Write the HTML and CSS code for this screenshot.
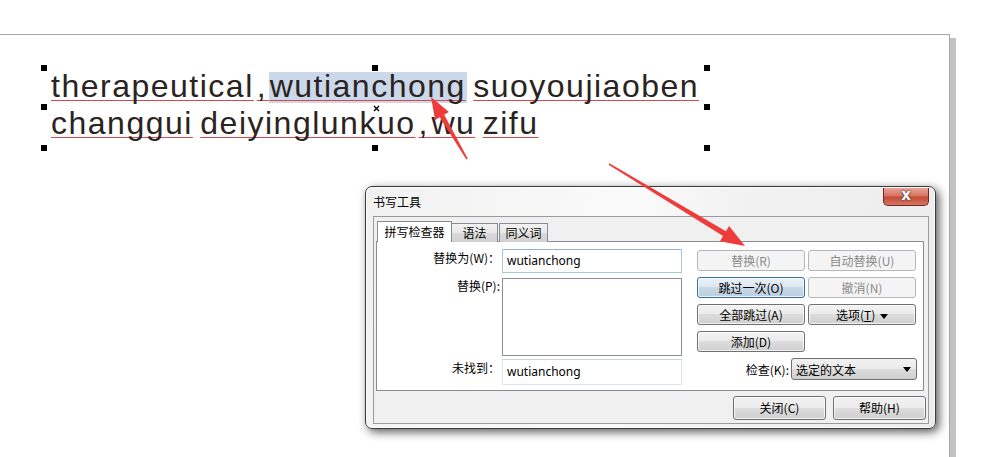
FILE: index.html
```html
<!DOCTYPE html>
<html lang="zh-CN">
<head>
    <meta charset="UTF-8">
    <meta name="viewport" content="width=device-width, initial-scale=1.0">
    <title>书写工具</title>
    <link rel="stylesheet" href="styles.css">
</head>
<body>
    <div class="page">
        <div class="frame">
            <p class="words"><span class="wd">therapeutical<span class="cm">,</span><span class="hl">wutianchong</span></span> <span class="wd">suoyoujiaoben</span><br><span class="wd">changgui</span> <span class="wd">deiyinglunkuo<span class="cm">,</span>wu</span> <span class="wd">zifu</span></p>

            <!-- selection handles -->
            <span class="handle h-tl"></span>
            <span class="handle h-tc"></span>
            <span class="handle h-tr"></span>
            <span class="handle h-ml"></span>
            <span class="handle h-mr"></span>
            <span class="handle h-bl"></span>
            <span class="handle h-bc"></span>
            <span class="handle h-br"></span>
            <svg class="center-mark" width="7" height="7" viewBox="0 0 7 7">
                <path d="M1 1 L6 6 M6 1 L1 6" stroke="#000" stroke-width="1.4"/>
            </svg>
        </div>
    </div>

    <div class="dialog">
        <div class="titlebar">
            <span class="title">书写工具</span>
            <span class="close">x</span>
        </div>
        <div class="client">
            <div class="tabs">
                <span class="tab active">拼写检查器</span>
                <span class="tab t2">语法</span>
                <span class="tab t3">同义词</span>
            </div>
            <div class="panel">
                <div class="fields">
                    <div class="row r1">
                        <label>替换为(W)：</label>
                        <div class="input focus">wutianchong</div>
                    </div>
                    <div class="row r2">
                        <label>替换(P):</label>
                        <div class="input area"></div>
                    </div>
                    <div class="row r3">
                        <label>未找到：</label>
                        <div class="input soft">wutianchong</div>
                    </div>
                </div>
                <div class="actions">
                    <div class="btn-grid">
                        <button class="btn" disabled>替换(R)</button>
                        <button class="btn" disabled>自动替换(U)</button>
                        <button class="btn default">跳过一次(O)</button>
                        <button class="btn" disabled>撤消(N)</button>
                        <button class="btn">全部跳过(A)</button>
                        <button class="btn">选项(<u>T</u>) <span class="caret"></span></button>
                        <button class="btn">添加(D)</button>
                    </div>
                    <div class="check">
                        <span class="check-label">检查(K):</span>
                        <div class="select">选定的文本<span class="caret"></span></div>
                    </div>
                </div>
            </div>
            <div class="footer">
                <button class="btn big">关闭(C)</button>
                <button class="btn big">帮助(H)</button>
            </div>
        </div>
    </div>

    <!-- red annotation arrows -->
    <svg class="arrows" width="998" height="457" viewBox="0 0 998 457">
        <polygon points="467.7,158.6 444.2,114.7 448.9,112 431,97 435.1,120 439.8,117.3 466.3,159.4" fill="#f03b3b"/>
        <polygon points="609.4,163.3 725.9,231.2 729.1,225.9 745,246 719.9,241.3 723.1,236 608.6,164.7" fill="#f03b3b"/>
    </svg>
</body>
</html>
```

FILE: styles.css
```css
body {
    margin: 0;
    background: #fff;
    font-family: "Liberation Sans", Arial, sans-serif;
    overflow: hidden;
}

.page {
    margin-top: 34px;
    width: 949px;
    height: 440px;
    border-top: 1px solid #a6a6a6;
    border-right: 1px solid #a6a6a6;
    box-shadow: 6px 4px 0 #c2c2c2;
}

.frame {
    position: relative;
    margin-left: 44px;
    margin-top: 33px;
    width: 663px;
    height: 80px;
}

.words {
    margin: 0;
    padding-left: 7px;
    font-size: 32px;
    line-height: 37px;
    letter-spacing: 1.5px;
    word-spacing: -3px;
    color: #2a231f;
    white-space: nowrap;
}

.wd {
    text-decoration: underline #d9474a 1px;
    text-underline-offset: 3px;
    text-decoration-skip-ink: none;
}

.cm {
    margin-left: 3px;
    letter-spacing: 4px;
}

.hl {
    background: linear-gradient(#cbd8e9, #cbd8e9) 0 4px / 100% 31px no-repeat;
    padding: 0 1px;
    margin: 0 -1px;
}

.handle {
    position: absolute;
    width: 6px;
    height: 6px;
    margin: -3px 0 0 -3px;
    background: #000;
}

.h-tl { left: 0; top: 0; }
.h-tc { left: 331px; top: 0; }
.h-tr { left: 663px; top: 0; }
.h-ml { left: 0; top: 39px; }
.h-mr { left: 663px; top: 39px; }
.h-bl { left: 0; top: 80px; }
.h-bc { left: 331px; top: 80px; }
.h-br { left: 663px; top: 80px; }

.center-mark {
    position: absolute;
    left: 329px;
    top: 37px;
}

.arrows {
    position: absolute;
    left: 0;
    top: 0;
    z-index: 10;
    pointer-events: none;
}

/* dialog window */
.dialog {
    position: absolute;
    left: 365px;
    top: 186px;
    width: 571px;
    height: 243px;
    box-sizing: border-box;
    border: 1px solid #3b3b3b;
    border-radius: 7px;
    background: linear-gradient(100deg, #f1f1f1 0%, #fafafa 45%, #f2f2f2 60%, #ececec 100%);
    box-shadow: 3px 3px 10px rgba(0, 0, 0, 0.65), inset 0 0 0 1px rgba(255, 255, 255, 0.8);
    font-family: "Noto Sans CJK SC", sans-serif;
    font-size: 12px;
    color: #000;
    z-index: 5;
}

.titlebar {
    height: 29px;
    display: flex;
    justify-content: space-between;
    align-items: flex-start;
    padding: 0 6px 0 7px;
}

.title {
    margin-top: 7px;
    line-height: 16px;
}

.close {
    width: 46px;
    height: 18px;
    box-sizing: border-box;
    margin-top: 1px;
    border: 1px solid #6d2a22;
    border-top: none;
    border-radius: 0 0 5px 5px;
    background: linear-gradient(#eaa497, #d77362 45%, #c64a37 55%, #d47865);
    color: #fff;
    font: bold 15px/15px "DejaVu Sans", sans-serif;
    text-align: center;
    text-shadow: 0 0 2px #333, 0 0 1px #333;
}

.client {
    margin: 0 6px 0 7px;
    height: 208px;
    box-sizing: border-box;
    border: 1px solid #9a9a9a;
    background: #f0f0f0;
    padding: 4px 4px 0 2px;
}

.tabs {
    display: flex;
    align-items: flex-end;
    height: 21px;
    padding-left: 1px;
    position: relative;
    z-index: 1;
    margin-bottom: -1px;
}

.tab {
    box-sizing: border-box;
    height: 19px;
    border: 1px solid #898c95;
    border-bottom: none;
    background: linear-gradient(#f3f3f3, #e8e8e8 50%, #dadada 51%, #d0d0d0);
    text-align: center;
    line-height: 18px;
}

.tab.active {
    width: 75px;
    height: 21px;
    line-height: 20px;
    background: #fff;
}

.tab.t2 {
    width: 46px;
    border-left: none;
}

.tab.t3 {
    width: 49px;
    margin-left: 1px;
}

.panel {
    box-sizing: border-box;
    width: 548px;
    height: 150px;
    border: 1px solid #898c95;
    background: #fff;
    display: flex;
    align-items: flex-start;
    padding-top: 7px;
}

.fields {
    display: flex;
    flex-direction: column;
}

.row {
    display: flex;
    align-items: flex-start;
}

.row label {
    width: 123px;
    margin-right: 2px;
    text-align: right;
    line-height: 16px;
}

.r1 { height: 24px; margin-bottom: 5px; }
.r1 label { padding-top: 1px; }
.r2 { height: 78px; margin-bottom: 3px; }
.r3 { height: 26px; }
.r3 label { padding-top: 1px; }

.input {
    box-sizing: border-box;
    width: 180px;
    height: 100%;
    border: 1px solid #abadb3;
    background: #fff;
    padding: 0 4px;
    font-family: "Noto Sans", sans-serif;
    font-size: 12px;
    line-height: 22px;
}

.input.focus {
    border-color: #a6c6e6;
    border-top-color: #8fb3d8;
}

.input.area {
    border-color: #8a8d93;
}

.input.soft {
    border-color: #dde4ea;
    border-top-color: #cdd3da;
    line-height: 23px;
}

.actions {
    margin-left: 15px;
    width: 220px;
}

.btn-grid {
    display: grid;
    grid-template-columns: 108px 108px;
    grid-auto-rows: 21px;
    gap: 6px 3px;
    margin-top: 1px;
}

.btn {
    box-sizing: border-box;
    border: 1px solid #707070;
    border-radius: 3px;
    background: linear-gradient(#f2f2f2 0%, #ebebeb 49%, #dddddd 50%, #cfcfcf 100%);
    box-shadow: inset 0 0 0 1px rgba(255, 255, 255, 0.7);
    font-family: "Noto Sans CJK SC", sans-serif;
    font-size: 12px;
    color: #000;
    padding: 0;
    line-height: 18px;
}

.btn[disabled] {
    border-color: #b4b8bb;
    background: #f4f4f4;
    box-shadow: none;
    color: #8a8a8a;
}

.btn.default {
    border-color: #3c6f9a;
    background: linear-gradient(#eaf1f7 0%, #dce7f0 49%, #c8d8e6 50%, #bcd0e1 100%);
}

.btn .caret {
    display: inline-block;
    vertical-align: middle;
    margin-left: 2px;
}

.caret {
    width: 0;
    height: 0;
    border-left: 4px solid transparent;
    border-right: 4px solid transparent;
    border-top: 5px solid #000;
}

.check {
    display: flex;
    justify-content: flex-end;
    align-items: center;
    margin-top: 6px;
}

.check-label {
    margin-right: 2px;
}

.select {
    box-sizing: border-box;
    width: 126px;
    height: 22px;
    border: 1px solid #707070;
    border-radius: 3px;
    background: linear-gradient(#f2f2f2 0%, #ebebeb 49%, #dddddd 50%, #cfcfcf 100%);
    display: flex;
    align-items: center;
    justify-content: space-between;
    padding: 0 5px 0 4px;
}

.footer {
    display: flex;
    justify-content: flex-end;
    gap: 7px;
    margin-top: 5px;
    margin-right: -2px;
}

.btn.big {
    width: 93px;
    height: 24px;
}
```
